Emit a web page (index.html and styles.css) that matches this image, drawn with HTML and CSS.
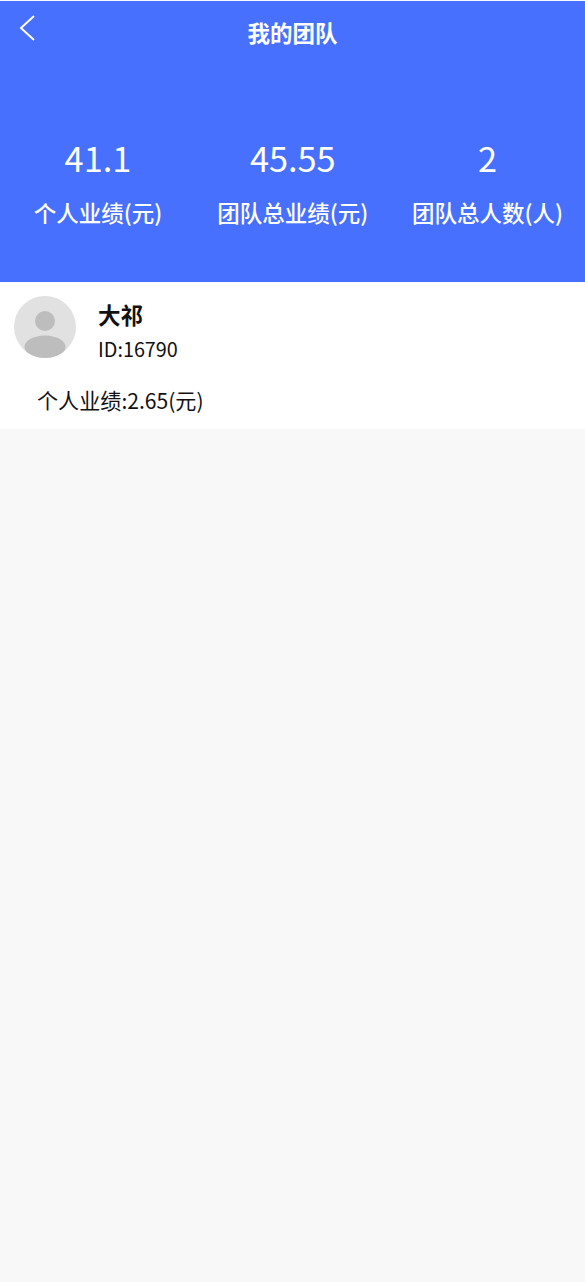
FILE: index.html
```html
<!DOCTYPE html>
<html lang="zh-CN">
<head>
    <meta charset="UTF-8">
    <meta name="viewport" content="width=device-width, initial-scale=1.0">
    <title>我的团队</title>
    <link rel="stylesheet" href="styles.css">
</head>
<body>
    <div class="header">
        <div class="nav">
            <svg class="back" width="18" height="28" viewBox="0 0 18 28">
                <path d="M16 2 L3 14 L16 26" fill="none" stroke="#fff" stroke-width="2"/>
            </svg>
            <div class="title">我的团队</div>
        </div>
        <div class="stats">
            <div class="stat">
                <div class="num">41.1</div>
                <div class="label">个人业绩(元)</div>
            </div>
            <div class="stat">
                <div class="num">45.55</div>
                <div class="label">团队总业绩(元)</div>
            </div>
            <div class="stat">
                <div class="num">2</div>
                <div class="label">团队总人数(人)</div>
            </div>
        </div>
    </div>

    <div class="member">
        <div class="member-top">
            <svg class="avatar" width="62" height="62" viewBox="0 0 62 62">
                <defs>
                    <clipPath id="round"><circle cx="31" cy="31" r="31"/></clipPath>
                </defs>
                <circle cx="31" cy="31" r="31" fill="#e1e1e1"/>
                <g clip-path="url(#round)">
                    <circle cx="31" cy="25" r="10" fill="#bdbdbd"/>
                    <ellipse cx="31" cy="51" rx="20.500" ry="11.500" fill="#bdbdbd"/>
                </g>
            </svg>
            <div class="info">
                <div class="name">大祁</div>
                <div class="uid">ID:16790</div>
            </div>
        </div>
        <div class="perf">个人业绩:2.65(元)</div>
    </div>
</body>
</html>
```

FILE: styles.css
```css
html, body {
    margin: 0;
    height: 100%;
}
body {
    font-family: "Noto Sans CJK SC", "Noto Sans", sans-serif;
    background-color: #f8f8f8;
    color: #111;
}
.header {
    height: 281px;
    margin-top: 1px;
    background-color: #4870ff;
    color: #fff;
}
.nav {
    height: 64px;
    display: flex;
    justify-content: center;
    position: relative;
}
.back {
    position: absolute;
    left: 18px;
    top: 13px;
}
.title {
    margin-top: 15px;
    font-size: 22.5px;
    line-height: 32px;
    font-weight: 700;
}
.stats {
    display: flex;
    padding: 67px 0 0 0.5px;
}
.stat {
    flex: 1;
    text-align: center;
}
.num {
    font-size: 34.3px;
    line-height: 50px;
}
.label {
    margin-top: 14px;
    font-size: 22.5px;
    line-height: 32px;
    font-weight: 500;
}
.member {
    height: 147px;
    background-color: #fff;
}
.member-top {
    display: flex;
    padding: 14px 0 0 14px;
}
.info {
    margin-left: 22px;
}
.name {
    font-size: 22.5px;
    line-height: 32px;
    font-weight: 700;
    margin-top: 2px;
}
.uid {
    font-size: 19.8px;
    line-height: 30px;
    margin-top: 4px;
}
.perf {
    margin: 20px 0 0 37px;
    font-size: 21.1px;
    line-height: 32px;
}
```
